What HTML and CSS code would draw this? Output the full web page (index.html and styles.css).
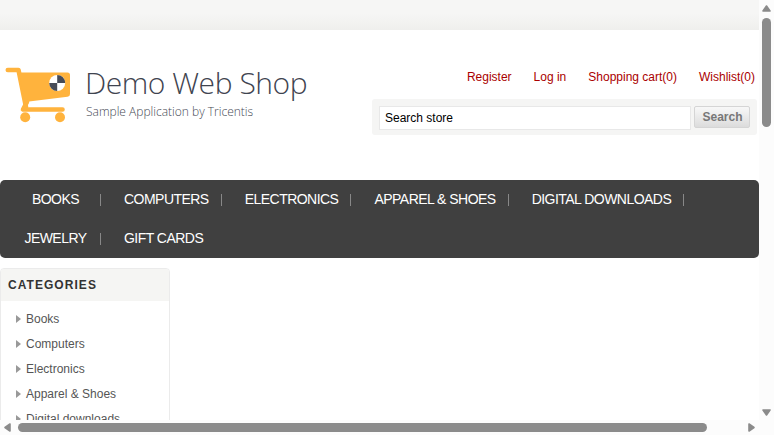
FILE: index.html
```html
<!DOCTYPE html>
<html lang="en">
<head>
<meta charset="utf-8">
<title>Demo Web Shop</title>
<link rel="stylesheet" href="styles.css">
</head>
<body>
<div class="window">
  <div class="page">
    <div class="top-band"></div>
    <header class="header">
      <a class="logo">
        <svg class="cart" width="68" height="60" viewBox="0 0 68 60">
          <path d="M3.800 5H14.500L22 42" fill="none" stroke="#ffb33d" stroke-width="4.600" stroke-linecap="round" stroke-linejoin="round"/>
          <path d="M15 7.500H63.500Q66 7.500 66 10V29Q66 31.500 63.500 31.800L21 37Z" fill="#ffb33d"/>
          <path d="M23 37L19 44.500H58.500" fill="none" stroke="#ffb33d" stroke-width="4.600" stroke-linecap="round" stroke-linejoin="round"/>
          <circle cx="21.200" cy="52.200" r="5" fill="#ffb33d"/>
          <circle cx="56" cy="52.200" r="5" fill="#ffb33d"/>
          <circle cx="53.200" cy="18" r="8" fill="#fff"/>
          <path d="M53.200 18V10A8 8 0 0 1 61.200 18ZM53.200 18V26A8 8 0 0 1 45.200 18Z" fill="#464b57"/>
        </svg>
        <span class="logo-text">
          <span class="logo-name">Demo Web Shop</span>
          <span class="logo-sub">Sample Application by Tricentis</span>
        </span>
      </a>
      <div class="header-side">
        <nav class="links"><a>Register</a><a>Log in</a><a>Shopping cart(0)</a><a>Wishlist(0)</a></nav>
        <div class="search"><div class="search-field">Search store</div><div class="search-button">Search</div></div>
      </div>
    </header>
    <ul class="menu">
      <li>BOOKS</li><li>COMPUTERS</li><li>ELECTRONICS</li><li>APPAREL &amp; SHOES</li><li>DIGITAL DOWNLOADS</li>
      <li>JEWELRY</li><li>GIFT CARDS</li>
    </ul>
    <aside class="block">
      <div class="block-title">CATEGORIES</div>
      <ul class="categories"><li>Books</li><li>Computers</li><li>Electronics</li><li>Apparel &amp; Shoes</li><li>Digital downloads</li></ul>
    </aside>
  </div>
  <div class="scroll-y">
    <svg width="9" height="7" viewBox="0 0 9 7"><path d="M4.500 1L8 6H1Z"/></svg>
    <div class="thumb-y"></div>
    <svg class="arrow-end" width="9" height="7" viewBox="0 0 9 7"><path d="M4.500 6L8 1H1Z"/></svg>
  </div>
  <div class="scroll-x">
    <svg width="7" height="9" viewBox="0 0 7 9"><path d="M1 4.500L6 1V8Z"/></svg>
    <div class="thumb-x"></div>
    <svg class="arrow-end" width="7" height="9" viewBox="0 0 7 9"><path d="M6 4.500L1 1V8Z"/></svg>
  </div>
  <div class="corner"></div>
</div>
</body>
</html>
```
FILE: styles.css
```css
* { box-sizing: border-box; }
body { margin: 0; background: #fff; font: 12px/14px "Liberation Sans", Arial, sans-serif; overflow: hidden; }
ul { list-style: none; margin: 0; padding: 0; }
.window { display: grid; grid-template: 420px 15px / 759px 15px; width: 774px; height: 435px; }
.page { overflow: hidden; }
.top-band { height: 30px; background: linear-gradient(#f6f6f5 45%, #efefed); }
.header { display: flex; justify-content: space-between; height: 150px; }
.logo { display: flex; padding: 35px 0 0 4px; }
.logo-text { display: flex; flex-direction: column; margin-left: 13px; font-family: "Open Sans", sans-serif; font-weight: 300; white-space: nowrap; }
.logo-name { font-size: 30px; line-height: 36px; letter-spacing: -0.45px; color: #3f4450; }
.logo-sub { margin: 2px 0 0 1px; font-size: 12px; line-height: 18px; color: #464a55; }
.header-side { width: 385px; margin-right: 2px; padding-top: 40px; }
.links { display: flex; justify-content: flex-end; gap: 22px; padding-right: 2px; color: #a00; white-space: nowrap; }
.search { display: flex; align-items: flex-start; gap: 3px; height: 36px; margin-top: 15px; padding: 7px; border-radius: 3px; background: #f5f5f4; }
.search-field { width: 312px; height: 24px; padding: 4px 5px; border: 1px solid #e8e8e8; background: #fff; color: #000; }
.search-button { width: 56px; height: 22px; padding-left: 1px; border: 1px solid #d5d5d5; border-radius: 2px; background: linear-gradient(#f8f8f8, #dcdcdc); color: #777; font-weight: bold; line-height: 20px; text-align: center; }
.menu { display: flex; flex-wrap: wrap; height: 78px; border-radius: 5px; background: #404040; color: #fff; font-size: 14px; letter-spacing: -0.53px; }
.menu li { position: relative; height: 39px; min-width: 90px; margin-left: 11px; padding: 0 13px 0 12px; line-height: 39px; text-align: center; white-space: nowrap; }
.menu li:not(:last-child)::after { content: ""; position: absolute; right: 0; top: 14px; width: 1px; height: 12px; background: #888; }
.block { width: 170px; height: 300px; margin-top: 10px; border: 1px solid #ebebeb; border-radius: 4px 4px 0 0; }
.block-title { height: 32px; padding-left: 7px; border-radius: 3px 3px 0 0; background: #f5f5f3; color: #333; font-weight: bold; line-height: 33px; letter-spacing: 1.05px; }
.categories { padding: 5px 0 0 15px; color: #555; }
.categories li { display: flex; align-items: center; height: 25px; white-space: nowrap; }
.categories li::before { content: ""; margin-right: 5px; border: solid transparent; border-width: 4.5px 0 4.5px 5px; border-left-color: #999; }
.scroll-y, .scroll-x { display: flex; align-items: center; background: #fcfcfc; }
.scroll-y { flex-direction: column; padding: 5px 0 4px; }
.scroll-x { padding: 0 4px 0 4px; }
.scroll-y svg, .scroll-x svg { flex: none; fill: #8b8b8b; stroke: #8b8b8b; stroke-width: 1.6px; stroke-linejoin: round; overflow: visible; }
.thumb-y { width: 9px; height: 109px; margin-top: 6px; border-radius: 5px; background: #8b8b8b; }
.thumb-x { width: 689px; height: 9px; margin-left: 7px; border-radius: 5px; background: #8b8b8b; }
.scroll-y .arrow-end { margin-top: auto; }
.scroll-x .arrow-end { margin-left: auto; }
.corner { background: #fcfcfc; }
```
